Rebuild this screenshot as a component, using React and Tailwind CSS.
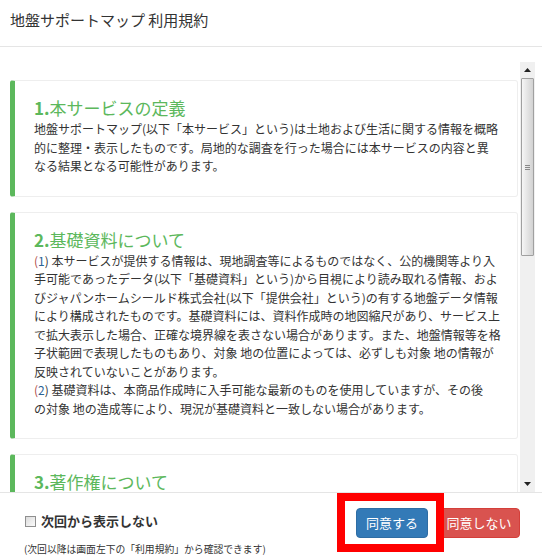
const FONT = { fontFamily: '"Noto Sans CJK JP", "Noto Sans", sans-serif' };

const Num = ({ n }) => (
  <>
    <span className="text-[#b04a48]">(</span>
    <span className="text-[#2a6496]">{n}</span>
    <span>)</span>
  </>
);

const SECTIONS = [
  {
    num: "1.",
    title: "本サービスの定義",
    lines: [
      "地盤サポートマップ(以下「本サービス」という)は土地および生活に関する情報を概略",
      "的に整理・表示したものです。局地的な調査を行った場合には本サービスの内容と異",
      "なる結果となる可能性があります。",
    ],
  },
  {
    num: "2.",
    title: "基礎資料について",
    lines: [
      <><Num n="1" /> 本サービスが提供する情報は、現地調査等によるものではなく、公的機関等より入</>,
      "手可能であったデータ(以下「基礎資料」という)から目視により読み取れる情報、およ",
      "びジャパンホームシールド株式会社(以下「提供会社」という)の有する地盤データ情報",
      "により構成されたものです。基礎資料には、資料作成時の地図縮尺があり、サービス上",
      "で拡大表示した場合、正確な境界線を表さない場合があります。また、地盤情報等を格",
      "子状範囲で表現したものもあり、対象 地の位置によっては、必ずしも対象 地の情報が",
      "反映されていないことがあります。",
      <><Num n="2" /> 基礎資料は、本商品作成時に入手可能な最新のものを使用していますが、その後</>,
      "の対象 地の造成等により、現況が基礎資料と一致しない場合があります。",
    ],
  },
  {
    num: "3.",
    title: "著作権について",
    lines: [
      "本サービスに掲載されている地図、文章、画像等の著作権は、提供会社または正当な",
      "権利者に帰属します。",
    ],
  },
];

const Card = ({ num, title, lines }) => (
  <div className="shrink-0 ml-[10px] mr-[2px] border border-[#eeeeee] border-l-[5px] border-l-[#5cb85c] rounded-[3px] bg-white pt-[15px] pb-[20px] pl-[19px] pr-[10px]">
    <h2 className="text-[17px] leading-[24px] text-[#5cb85c] whitespace-nowrap">
      <span className="font-bold">{num}</span>
      {title}
    </h2>
    <div className="text-[12px] leading-[18.5px] text-[#333333]">
      {lines.map((l, i) => (
        <div key={i} className="whitespace-nowrap">{l}</div>
      ))}
    </div>
  </div>
);

const Arrow = ({ up }) => (
  <div className="h-[16px] flex items-center justify-center bg-[#f0f0f0]">
    <svg width="7" height="4" viewBox="0 0 7 4">
      {up ? <polygon points="3.5,0 7,4 0,4" fill="#222" /> : <polygon points="0,0 7,0 3.5,4" fill="#222" />}
    </svg>
  </div>
);

const ScrollBar = () => (
  <div className="w-[15px] h-full flex flex-col bg-[#f0f0f0]">
    <Arrow up />
    <div className="h-[178px] mx-[1px] border border-[#a0a0a0] rounded-[1px] bg-gradient-to-r from-[#f6f6f6] via-[#e4e4e4] to-[#d2d2d2] flex items-center justify-center">
      <div className="flex flex-col gap-[1px]">
        <div className="w-[5px] h-px bg-[#888]" />
        <div className="w-[5px] h-px bg-[#888]" />
        <div className="w-[5px] h-px bg-[#888]" />
      </div>
    </div>
    <div className="flex-1" />
    <Arrow />
  </div>
);

export default function App() {
  return (
    <div className="relative w-[542px] h-[560px] bg-white flex flex-col overflow-hidden" style={FONT}>
      <header className="h-[47px] shrink-0 border-b border-[#e5e5e5] pl-[10px] pt-[9px]">
        <h1 className="text-[15px] leading-[22px] text-[#333333]">地盤サポートマップ 利用規約</h1>
      </header>

      <div className="h-[15px] shrink-0" />

      <div className="h-[430px] shrink-0 flex">
        <div className="w-[520px] h-full overflow-hidden flex flex-col gap-[15px] pt-[18px]">
          {SECTIONS.map((s) => (
            <Card key={s.num} {...s} />
          ))}
        </div>
        <ScrollBar />
      </div>

      <footer className="flex-1 border-t border-[#e5e5e5] flex items-start">
        <div className="flex-1 pl-[24px] pt-[19px]">
          <label className="flex items-center gap-[5px]">
            <span className="w-[11px] h-[11px] ml-[1px] border border-[#8f8f8f] bg-gradient-to-br from-[#dcdcdc] to-[#fbfbfb]" />
            <span className="text-[13px] leading-[18px] font-bold text-[#333333]">次回から表示しない</span>
          </label>
          <p className="mt-[13px] text-[9.8px] leading-[12px] text-[#333333] whitespace-nowrap">
            (次回以降は画面左下の「利用規約」から確認できます)
          </p>
        </div>
        <div className="flex items-center gap-[10px] pt-[15px] pr-[22px]">
          <button className="w-[72px] h-[30px] rounded-[4px] bg-[#337ab7] border border-[#2e6da4] text-white text-[13px]">
            同意する
          </button>
          <button className="w-[82px] h-[30px] rounded-[4px] bg-[#d9534f] border border-[#d43f3a] text-white text-[13px]">
            同意しない
          </button>
        </div>
      </footer>

      {/* highlight annotation */}
      <div className="absolute left-[337px] top-[493px] w-[107px] h-[59px] border-[8px] border-[#ff0000] pointer-events-none" />
    </div>
  );
}
